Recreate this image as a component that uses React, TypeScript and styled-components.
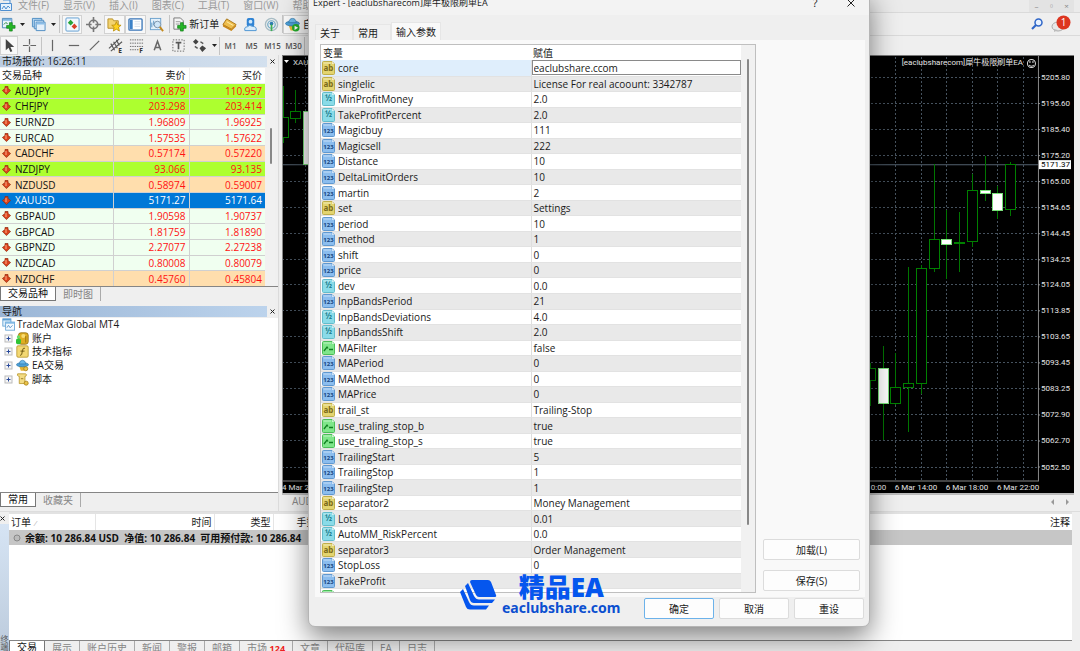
import React from 'react';
import styled, { createGlobalStyle, css } from 'styled-components';

const GlobalStyle = createGlobalStyle`
  * { box-sizing: border-box; }
  body {
    margin: 0;
    overflow: hidden;
    background: #efefef;
    color: #1a1a1a;
    font: 10px/14px "Open Sans", "Noto Sans CJK SC", sans-serif;
  }
  button, input { font: inherit; color: inherit; margin: 0; padding: 0; border: 0; background: none; }
  table { border-collapse: collapse; border-spacing: 0; }
  svg { display: block; flex: none; }
`;

/* ---------- shell ---------- */

const Shell = styled.div`
  position: relative;
  display: flex;
  flex-direction: column;
  height: 100vh;
  overflow: hidden;
`;

const MenuBar = styled.nav`
  display: flex;
  align-items: flex-start;
  height: 12px;
  background: #ebebeb;
  color: #999;
`;

const MenuItem = styled.button`
  margin-right: 14px;
  line-height: 10px;
  white-space: nowrap;
`;

const MenuLogo = styled.span`
  width: 18px;
`;

const WindowButtons = styled.div`
  display: flex;
  align-self: stretch;
  margin-left: auto;
  margin-right: 6px;
  background: #e3e3e3;
`;

const WindowButton = styled.button`
  width: 15px;
  color: #888;
  font-size: 8px;
  line-height: 10px;
`;

const ToolBar = styled.div<{ $height: number }>`
  display: flex;
  align-items: center;
  height: ${p => p.$height}px;
  border-top: 1px solid #dadada;
`;

const Tool = styled.button<{ $width?: number; $on?: boolean }>`
  display: flex;
  align-items: center;
  justify-content: center;
  flex: none;
  width: ${p => p.$width ?? 21}px;
  height: 19px;
  white-space: nowrap;
  ${p => p.$on && css`background: #f8f8f8; border: 1px solid #d2d2d2;`}
`;

const Divider = styled.span`
  flex: none;
  width: 1px;
  height: 18px;
  background: #c4c4c4;
`;

const Period = styled(Tool)`
  width: 21px;
  color: #555;
  font-size: 8px;
  font-weight: 600;
`;

const ToolEnd = styled.div`
  display: flex;
  align-items: center;
  gap: 8px;
  margin-left: auto;
  margin-right: 9px;
`;

const Workspace = styled.main`
  display: flex;
  height: 457px;
  flex: none;
  border-bottom: 1px solid #ddd;
`;

/* ---------- side panels ---------- */

const Side = styled.aside`
  display: flex;
  flex-direction: column;
  flex: none;
  width: 279px;
  border-right: 1px solid #dcdcdc;
`;

const PanelTitle = styled.h2<{ $height: number; $from: string; $to: string }>`
  display: flex;
  align-items: center;
  height: ${p => p.$height}px;
  margin: 0;
  font-size: 10px;
  font-weight: 400;
  line-height: 11px;
  > span {
    flex: 1;
    padding-left: 2px;
    background: linear-gradient(90deg, ${p => p.$from}, ${p => p.$to});
  }
`;

const IconButton = styled.button<{ $width: number; $height: number }>`
  display: flex;
  align-items: center;
  justify-content: center;
  flex: none;
  width: ${p => p.$width}px;
  height: ${p => p.$height}px;
`;

const MarketBody = styled.div`
  display: flex;
  height: 218px;
  overflow: hidden;
`;

const QuoteTable = styled.table`
  width: 265px;
  height: 219px;
  table-layout: fixed;
  background: #fff;
  th, td {
    height: 15px;
    padding: 0 3px 0 0;
    border-right: 1px solid #d0d0d0;
    border-bottom: 1px solid #d0d0d0;
    font-weight: 400;
    line-height: 14px;
    text-align: right;
  }
  th { border-color: #eee; }
  th:first-child, td:first-child { padding-left: 2px; text-align: left; }
  th:last-child, td:last-child { padding-right: 3px; border-right: 0; }
`;

const tones = { lime: '#adff2f', mint: '#f0fff0', peach: '#ffdead', blue: '#0078d7' };
type Tone = keyof typeof tones;

const QuoteRow = styled.tr<{ $tone: Tone }>`
  background: ${p => tones[p.$tone]};
  td { color: ${p => (p.$tone === 'blue' ? '#fff' : '#ff1212')}; }
  td:first-child { color: ${p => (p.$tone === 'blue' ? '#fff' : '#111')}; }
`;

const Symbol = styled.span`
  display: flex;
  align-items: center;
  gap: 4px;
`;

const ScrollGutter = styled.div<{ $top: number; $length: number; $inset: number }>`
  flex: 1;
  padding: ${p => p.$top}px 0 0 ${p => p.$inset}px;
  background: #f1f1f1;
  &::before {
    content: "";
    display: block;
    width: 2px;
    height: ${p => p.$length}px;
    border-radius: 1px;
    background: #888;
  }
`;

const TabStrip = styled.div<{ $height: number }>`
  display: flex;
  align-items: flex-start;
  flex: none;
  height: ${p => p.$height}px;
  overflow: hidden;
  border-top: 1px solid #858585;
`;

const Tab = styled.button<{ $on?: boolean }>`
  flex: none;
  height: 14px;
  padding: 0 7px;
  border-right: 1px solid #aaa;
  color: #858585;
  line-height: 13px;
  white-space: nowrap;
  ${p => p.$on && css`
    background: #fff;
    color: #111;
    border: 1px solid #777;
    border-top: 0;
  `}
  b { color: #f02020; font-size: 9px; }
`;

const NavBody = styled.div`
  flex: 1;
  background: #fff;
`;

const Tree = styled.ul`
  display: grid;
  grid-auto-rows: 1fr;
  height: 68px;
  margin: 0;
  padding: 0;
  list-style: none;
  line-height: 13px;
`;

const TreeItem = styled.li<{ $nested?: boolean }>`
  display: flex;
  align-items: center;
  gap: ${p => (p.$nested ? 3 : 2)}px;
  padding-left: ${p => (p.$nested ? 4 : 2)}px;
`;

/* ---------- chart ---------- */

const ChartColumn = styled.section`
  display: flex;
  flex-direction: column;
  flex: 1;
  min-width: 0;
  margin-left: 3px;
  margin-right: 6px;
`;

const ChartSvg = styled.svg`
  width: 100%;
  height: 438px;
  background: #000;
  border-top: 1px solid #777;
  text { font-family: Roboto, "Noto Sans CJK SC", sans-serif; font-size: 8px; fill: #e4e4e4; }
`;

const ChartTabs = styled.div`
  display: flex;
  justify-content: space-between;
  height: 17px;
  padding: 0 4px 0 10px;
  border-top: 2px solid #bbb;
  color: #888;
  line-height: 13px;
`;

/* ---------- terminal ---------- */

const Terminal = styled.section`
  display: flex;
  flex: 1;
  min-height: 0;
  padding-right: 8px;
`;

const TerminalGrip = styled.div`
  display: flex;
  flex-direction: column;
  width: 9px;
  overflow: hidden;
  > span {
    flex: 1;
    display: flex;
    justify-content: flex-end;
    writing-mode: vertical-rl;
    color: #555;
    font-size: 8px;
    line-height: 9px;
    background: linear-gradient(#d6e4f4, #bccbdc);
  }
`;

const TerminalMain = styled.div`
  display: flex;
  flex-direction: column;
  flex: 1;
  min-width: 0;
`;

const TerminalBody = styled.div`
  flex: 1;
  min-height: 0;
  border-top: 2px solid #e2e2e2;
  background: #fff;
`;

const TerminalTable = styled.table`
  width: 100%;
  table-layout: fixed;
  th {
    height: 16px;
    padding: 0 2px;
    border-right: 1px solid #e5e5e5;
    font-weight: 400;
    text-align: right;
    white-space: nowrap;
  }
  th:first-child { text-align: left; }
  th:last-child { border-right: 0; }
  td {
    height: 15px;
    padding: 0 4px;
    background: #c6c6c6;
    font-weight: 700;
    color: #111;
    white-space: pre;
  }
`;

const SortMark = styled.span`
  margin-left: 4px;
  color: #aaa;
  font-size: 8px;
`;

const Balance = styled.span`
  display: flex;
  align-items: center;
  gap: 4px;
  line-height: 14px;
`;

/* ---------- dialog ---------- */

const Dialog = styled.form`
  position: absolute;
  top: -10px;
  left: 308px;
  width: 562px;
  display: flex;
  flex-direction: column;
  border: 1px solid #b5b5b5;
  border-radius: 7px;
  background: #efefef;
  box-shadow: 0 10px 28px rgba(0, 0, 0, 0.5);
`;

const DialogTitle = styled.header`
  display: flex;
  align-items: center;
  height: 24px;
  padding: 0 10px 0 4px;
  border-radius: 7px 7px 0 0;
  background: #f3f3f3;
  h1 { flex: 1; margin: 0; font-size: 9px; font-weight: 400; }
  button { font-size: 11px; }
  button + button { margin-left: 20px; }
`;

const DialogTabs = styled.div`
  display: flex;
  align-items: flex-end;
  height: 25px;
  padding-left: 6px;
`;

const DialogTab = styled.button<{ $on?: boolean }>`
  height: ${p => (p.$on ? 18 : 16)}px;
  padding: ${p => (p.$on ? '0 4px' : '0 12px 0 4px')};
  border: 1px solid #e6e6e6;
  border-bottom: 0;
  background: ${p => (p.$on ? '#f9f9f9' : '#f1f1f1')};
`;

const DialogPanel = styled.div`
  display: flex;
  margin: 0 4px 0 6px;
  height: 557px;
  padding: 4px 5px;
  background: #f9f9f9;
`;

const ParamBox = styled.div`
  display: flex;
  width: 436px;
  height: 549px;
  overflow: hidden;
  border: 1px solid #bfbfbf;
  background: #fff;
`;

const ParamTable = styled.table`
  width: 420px;
  height: 560px;
  table-layout: fixed;
  th, td {
    height: 15px;
    padding: 0 0 0 2px;
    font-weight: 400;
    line-height: 14px;
    text-align: left;
    white-space: nowrap;
  }
  td { border-bottom: 1px solid #e2e2e2; }
  td:first-child { padding-left: 1px; }
  td + td { border-left: 1px solid #dedede; }
  tbody tr:nth-child(even) { background: #e9e9e9; }
  tbody tr:first-child td:first-child { background: #dfeefc; }
  tbody tr:first-child td + td { padding: 0; }
`;

const ParamName = styled.span`
  display: flex;
  align-items: center;
  gap: 3px;
  height: 14px;
`;

const ValueInput = styled.input`
  display: block;
  width: 100%;
  height: 15px;
  padding-left: 1px;
  border: 1px solid #8a8a8a;
  background: #fff;
  outline: 0;
`;

const SideButtons = styled.div`
  display: flex;
  flex-direction: column;
  justify-content: flex-end;
  flex: 1;
  gap: 10px;
  padding: 0 0 2px 7px;
`;

const PushButton = styled.button<{ $primary?: boolean }>`
  height: 21px;
  flex: none;
  border: 1px solid ${p => (p.$primary ? '#6cb2ea' : '#dcdcdc')};
  border-radius: 2px;
  background: #fdfdfd;
`;

const DialogFooter = styled.footer`
  display: flex;
  justify-content: flex-end;
  gap: 5px;
  padding: 1px 5px 7px;
  ${PushButton} { width: 70px; }
`;

const Watermark = styled.div`
  position: absolute;
  top: 574px;
  left: 460px;
  display: flex;
  align-items: center;
  gap: 4px;
  color: #0556ee;
  font-family: "Noto Sans", "Noto Sans CJK SC", sans-serif;
  font-weight: 700;
  text-align: center;
  strong { display: block; font-size: 26px; line-height: 27px; }
  span { display: block; font-size: 14px; line-height: 14px; color: #0b4fd0; }
`;

/* ---------- icons ---------- */

type Kind = 'ab' | 'half' | 'num' | 'bool';
const kinds: Record<Kind, [string, string, string, string]> = {
  ab: ['#e3d46f', '#c0ae48', '#7a6a18', 'ab'],
  half: ['#8adbe8', '#62bccb', '#22808f', '½'],
  num: ['#8bbdee', '#5f98d0', '#17457f', '123'],
  bool: ['#7fe68a', '#4bbd58', '#0f8020', ''],
};

function KindIcon({ kind }: { kind: Kind }) {
  const [fill, edge, ink, label] = kinds[kind];
  return (
    <svg width="13" height="14" viewBox="0 0 13 14">
      <path d="M.5 1.500Q.5 .5 1.500 .5H10L12.500 3V12.500Q12.500 13.500 11.500 13.500H1.500Q.5 13.500 .5 12.500Z" fill={fill} stroke={edge} />
      <path d="M10 .5V3H12.500" fill="#fff" opacity=".6" />
      <path d="M1.500 2H9" stroke="#fff" opacity=".5" />
      {kind === 'bool' ? (
        <path d="M2 10L5 6L6 7.500M7 8.500H11" stroke={ink} strokeWidth="1.300" fill="none" />
      ) : (
        <text x="6.500" y={kind === 'half' ? 9 : 10} textAnchor="middle" fill={ink} fontFamily="Noto Sans" fontWeight="700" fontSize={kind === 'num' ? 6 : 8}>{label}</text>
      )}
    </svg>
  );
}

const Cross = ({ size, weight = 1 }: { size: number; weight?: number }) => (
  <svg width={size} height={size} viewBox={`0 0 ${size} ${size}`}>
    <path d={`M.5 .5L${size - 0.500} ${size - 0.500}M${size - 0.500} .5L.5 ${size - 0.500}`} stroke="#222" strokeWidth={weight} />
  </svg>
);

const QuoteArrow = () => (
  <svg width="9" height="9" viewBox="0 0 9 9">
    <path d="M3 .5H6V2.500L8.600 4.500L4.500 8.600L.4 4.500L3 2.500Z" fill="#d9431c" stroke="#8f2a10" strokeWidth=".7" />
    <path d="M4 2V6" stroke="#ffb08a" />
  </svg>
);

const Caret = () => (
  <svg width="5" height="3" viewBox="0 0 5 3"><path d="M0 0H5L2.500 3Z" fill="#222" /></svg>
);

const Plus = () => (
  <path d="M9 6H12V9H15V12H12V15H9V12H6V9H9Z" fill="#25b525" stroke="#0b7a12" strokeWidth=".7" />
);

const Glyph = ({ children, size = 15 }: { children: React.ReactNode; size?: number }) => (
  <svg width={size} height={size} viewBox="0 0 16 16" fill="none">{children}</svg>
);

const NewChartIcon = () => <Glyph><path d="M1.500 1.500H11.500V11.500H1.500Z" fill="#e8f2fb" stroke="#4a86b8" /><path d="M2 2H11V4H2Z" fill="#7fb4e0" /><path d="M3 8L5 6L7 7" stroke="#2a8a3a" /><Plus /></Glyph>;
const ProfilesIcon = () => <Glyph><path d="M1.500 1.500H11.500V10.500H1.500Z" fill="#b9d8f2" stroke="#4d8cc2" /><path d="M3.500 3.500H13.500V12.500H3.500Z" fill="#cfe4f6" stroke="#4d8cc2" /><path d="M5.500 5.500H15V14.500H5.500Z" fill="#e4f0fa" stroke="#4d8cc2" /><path d="M6 6H14.500V8H6Z" fill="#8abde8" /></Glyph>;
const WatchIcon = () => <Glyph><rect x="1" y="1" width="14" height="14" rx="1" fill="#f2f8fd" stroke="#5e9cd0" /><path d="M6 3L9 6L6 9L3 6Z" fill="#27a53a" /><path d="M10 7L13 10L10 13L7 10Z" fill="#d9402a" /></Glyph>;
const TargetIcon = () => <Glyph><circle cx="8" cy="8" r="4.500" stroke="#777" strokeWidth="1.700" /><path d="M8 0V6M8 10V16M0 8H6M10 8H16" stroke="#777" strokeWidth="1.700" /></Glyph>;
const StarFolderIcon = () => <Glyph><path d="M1 2H6L7 4H12V12H1Z" fill="#f3d370" stroke="#b89026" /><path d="M10 5L11.500 8.500L15 8.800L12.400 11L13.200 15L10 13L6.800 15L7.600 11L5 8.800L8.500 8.500Z" fill="#ffd21f" stroke="#b88a00" strokeWidth=".8" /></Glyph>;
const DataIcon = () => <Glyph><rect x="1" y="2" width="14" height="12" rx="1" fill="#fff" stroke="#3a76b8" strokeWidth="1.400" /><path d="M2 3H5V13H2Z" fill="#3c82c8" /><path d="M7 5H13M7 7.500H13M7 10H13" stroke="#d5dfea" /></Glyph>;
const TesterIcon = () => <Glyph><rect x="1.500" y="1.500" width="11" height="12" fill="#e3f0fb" stroke="#6aa0cc" /><path d="M3 11V6M5 9V4" stroke="#5a93c2" /><circle cx="9" cy="8" r="3.500" fill="#cfe6f8" stroke="#7b93ab" /><path d="M11.500 10.500L15 15" stroke="#c58a1c" strokeWidth="2" /></Glyph>;
const OrderIcon = () => <Glyph><path d="M2 1H9L12 4V13H2Z" fill="#f4f4f4" stroke="#777" /><path d="M4 5H9M4 7.500H8" stroke="#999" /><Plus /></Glyph>;
const BookIcon = () => <Glyph><path d="M1 8L5 2L15 8L10 13Z" fill="#eebd4c" stroke="#a87416" /><path d="M1 8V10L10 15L15 10V8L10 13Z" fill="#c98618" /><path d="M5 5L12 9" stroke="#fff0b0" /></Glyph>;
const CommunityIcon = () => <Glyph><rect x="4" y="1" width="8" height="9" rx="2" fill="#2f83d4" /><circle cx="8" cy="5" r="2" fill="#cfe8fb" /><path d="M2 14.500Q1 10.500 4.500 10.500Q7 7.500 10 10Q15 10 14 14.500Z" fill="#d9ecfa" stroke="#4a92d2" /></Glyph>;
const SignalIcon = () => <Glyph><circle cx="8" cy="8" r="6.500" stroke="#a8bcc4" strokeWidth="1.500" /><circle cx="8" cy="8" r="4" stroke="#6fa9c6" strokeWidth="1.300" /><circle cx="8" cy="7" r="2" fill="#2b7cb0" /><path d="M8 8V15" stroke="#3fb052" strokeWidth="1.800" /></Glyph>;
const HatIcon = ({ play, size }: { play?: boolean; size?: number }) => <Glyph size={size}><path d="M3.500 8H12.500L10 14.500H6Z" fill="#e8b531" /><ellipse cx="8" cy="7" rx="7.500" ry="2.600" fill="#4b9fd6" stroke="#276fa5" strokeWidth=".7" /><path d="M4 6Q4.500 1.500 8 1.500Q11.500 1.500 12 6Z" fill="#6cb8e8" stroke="#276fa5" strokeWidth=".7" />{play ? <><circle cx="11.500" cy="11.500" r="4" fill="#22ad2c" /><path d="M10.200 9.200V13.800L14 11.500Z" fill="#fff" /></> : <circle cx="12" cy="12" r="2.500" fill="#eac44a" stroke="#a87f12" />}</Glyph>;
const PointerIcon = () => <Glyph><path d="M4 1V13L7 10.500L9 15L11 14L9 9.700H13Z" fill="#444" /></Glyph>;
const Strokes = ({ d, w = 1.300 }: { d: string; w?: number }) => <Glyph><path d={d} stroke="#666" strokeWidth={w} /></Glyph>;
const ChannelIcon = () => <Glyph><path d="M1 11L12 1M3 14L15 4M3 6L7 13M6 4L10 11M9 2L12 8" stroke="#555" strokeWidth="1.200" /><text x="11" y="16" fontSize="7" fontWeight="700" fill="#333">E</text></Glyph>;
const FiboIcon = () => <Glyph><path d="M1 2H15M1 5.500H15M1 9H15M1 12.500H10" stroke="#666" strokeDasharray="1.500 1" /><text x="11" y="16" fontSize="7" fontWeight="700" fill="#333">F</text></Glyph>;
const LabelIcon = () => <Glyph><rect x="2" y="2" width="12" height="12" stroke="#666" strokeDasharray="1.500 1.500" /><path d="M5 5H11M8 5V12" stroke="#555" strokeWidth="1.800" /></Glyph>;
const ArrowsIcon = () => <Glyph><path d="M1 4L4 1L7 4L4 7ZM8 11L11 8L15 11L11 15Z" fill="#444" /><path d="M3 9L6 11M9 4L12 6" stroke="#555" strokeWidth="1.500" /></Glyph>;
const PlatformIcon = () => <Glyph size={13}><rect x="1" y="1" width="10" height="9" fill="#dceefb" stroke="#5e9fd2" /><path d="M1 1H11V3H1Z" fill="#5e9fd2" /><rect x="4.500" y="5" width="11" height="10" fill="#f5faff" stroke="#5e9fd2" /><path d="M4.500 5H15.500V7H4.500Z" fill="#7fb8e4" /><path d="M6 12L8 9L10 12L13 9" stroke="#4a8ac2" /></Glyph>;
const AccountsIcon = () => <Glyph size={13}><rect x="3" y="1" width="12" height="14" rx="3" fill="#dfae22" stroke="#8f6a0c" /><circle cx="9" cy="5" r="2.500" fill="#f8dc72" /><path d="M12 5V13" stroke="#8f6a0c" /><rect x="0" y="8" width="6" height="7" rx="2" fill="#2fc436" /><circle cx="3" cy="6" r="2" fill="#62e066" /></Glyph>;
const IndicatorIcon = () => <Glyph size={13}><rect x="1" y="1" width="14" height="14" rx="1.500" fill="#f3d873" stroke="#b8962c" /><path d="M11 4Q8.500 3 8 6.500L7 11.500Q6.500 13 5 12.500M5.500 7.500H10.500" stroke="#6b5510" strokeWidth="1.200" /></Glyph>;
const ScriptIcon = () => <Glyph size={13}><path d="M2 1H12Q14 2 12 4H11V13H4V4H3Q1 3 2 1Z" fill="#f3dc85" stroke="#b8962c" /><path d="M6 7H9" stroke="#8a6d1a" /><circle cx="12.500" cy="12.500" r="2.500" fill="#eac44a" stroke="#a87f12" /></Glyph>;
const Expander = () => <svg width="9" height="9" viewBox="0 0 9 9"><rect x="1" y="1" width="7" height="7" fill="#f6f6f6" stroke="#bbb" /><path d="M2.500 4.500H6.500M4.500 2.500V6.500" stroke="#2a4a9a" /></svg>;

/* ---------- data ---------- */

const menus = ['文件(F)', '显示(V)', '插入(I)', '图表(C)', '工具(T)', '窗口(W)', '帮助(H)'];

const quotes: [string, string, string, Tone][] = [
  ['AUDJPY', '110.879', '110.957', 'lime'],
  ['CHFJPY', '203.298', '203.414', 'lime'],
  ['EURNZD', '1.96809', '1.96925', 'mint'],
  ['EURCAD', '1.57535', '1.57622', 'mint'],
  ['CADCHF', '0.57174', '0.57220', 'peach'],
  ['NZDJPY', '93.066', '93.135', 'lime'],
  ['NZDUSD', '0.58974', '0.59007', 'peach'],
  ['XAUUSD', '5171.27', '5171.64', 'blue'],
  ['GBPAUD', '1.90598', '1.90737', 'mint'],
  ['GBPCAD', '1.81759', '1.81890', 'mint'],
  ['GBPNZD', '2.27077', '2.27238', 'mint'],
  ['NZDCAD', '0.80008', '0.80079', 'mint'],
  ['NZDCHF', '0.45760', '0.45804', 'peach'],
];

const params: [Kind, string, string][] = [
  ['ab', 'core', 'eaclubshare.ccom'],
  ['ab', 'singlelic', 'License For real acoount: 3342787'],
  ['half', 'MinProfitMoney', '2.0'],
  ['half', 'TakeProfitPercent', '2.0'],
  ['num', 'Magicbuy', '111'],
  ['num', 'Magicsell', '222'],
  ['num', 'Distance', '10'],
  ['num', 'DeltaLimitOrders', '10'],
  ['num', 'martin', '2'],
  ['ab', 'set', 'Settings'],
  ['num', 'period', '10'],
  ['num', 'method', '1'],
  ['num', 'shift', '0'],
  ['num', 'price', '0'],
  ['half', 'dev', '0.0'],
  ['num', 'InpBandsPeriod', '21'],
  ['half', 'InpBandsDeviations', '4.0'],
  ['half', 'InpBandsShift', '2.0'],
  ['bool', 'MAFilter', 'false'],
  ['num', 'MAPeriod', '0'],
  ['num', 'MAMethod', '0'],
  ['num', 'MAPrice', '0'],
  ['ab', 'trail_st', 'Trailing-Stop'],
  ['bool', 'use_traling_stop_b', 'true'],
  ['bool', 'use_traling_stop_s', 'true'],
  ['num', 'TrailingStart', '5'],
  ['num', 'TrailingStop', '1'],
  ['num', 'TrailingStep', '1'],
  ['ab', 'separator2', 'Money Management'],
  ['half', 'Lots', '0.01'],
  ['half', 'AutoMM_RiskPercent', '0.0'],
  ['ab', 'separator3', 'Order Management'],
  ['num', 'StopLoss', '0'],
  ['num', 'TakeProfit', '0'],
  ['bool', '', ''],
];

const prices = ['5205.80', '5195.60', '5185.40', '5175.20', '5165.00', '5154.65', '5144.45', '5134.25', '5124.05', '5113.85', '5103.65', '5093.45', '5083.25', '5072.90', '5062.70', '5052.50'];

/* centre x, wick top, wick bottom, body top, body bottom, filled */
const candles: [number, number, number, number, number, boolean][] = [
  [284, 86, 143, 117, 137, false],
  [296, 90, 123, 111, 118, false],
  [309, 111, 165, 111, 164, true],
  [870, 363, 406, 368, 380, false],
  [883, 346, 440, 368, 403, true],
  [895, 353, 405, 387, 403, false],
  [908, 267, 432, 383, 387, false],
  [921, 265, 394, 268, 383, false],
  [934, 164, 272, 239, 268, false],
  [946, 210, 279, 239, 244, true],
  [959, 212, 272, 242, 243, false],
  [972, 174, 247, 190, 241, false],
  [985, 156, 201, 190, 193, true],
  [997, 186, 219, 193, 210, true],
  [1010, 162, 216, 164, 209, false],
];

function Chart() {
  const columns = Array.from({ length: 30 }, (_, i) => Math.round(1023 - i * 25.600));
  return (
    <ChartSvg viewBox="283 56 791 437" preserveAspectRatio="xMaxYMin slice">
      <g stroke="#46525e" strokeDasharray="2 2" shapeRendering="crispEdges">
        {prices.map((p, i) => {
          const y = Math.round(77 + i * 25.930) + 0.500;
          return <path key={p} d={`M283 ${y}H1038`} />;
        })}
        {columns.map(x => <path key={x} d={`M${x + 0.500} 57V480`} />)}
      </g>
      <path d="M283 164.500H1038" stroke="#53626f" />
      {candles.map(([x, hi, lo, top, bottom, filled]) => (
        <g key={x} fill={filled ? '#fff' : '#000'} shapeRendering="crispEdges">
          <path d={`M${x + 0.500} ${hi}V${lo}`} stroke="#007500" />
          <rect x={x - 4.500} y={top + 0.500} width="10" height={bottom - top} stroke={filled ? '#7be07b' : '#008000'} />
        </g>
      ))}
      <path d="M283 480.500H1038.500V56M283.500 56V493" stroke="#888" fill="none" />
      {prices.map((p, i) => (
        <g key={p}>
          <path d={`M1038 ${Math.round(77 + i * 25.930) + 0.500}H1040`} stroke="#999" />
          <text x="1041" y={Math.round(80 + i * 25.930)}>{p}</text>
        </g>
      ))}
      <rect x="1039" y="160" width="32" height="9" fill="#fff" />
      <text x="1041" y="167" style={{ fill: '#000' }}>5171.37</text>
      <path d="M285 60H290L287.500 63Z" fill="#fff" />
      <text x="294" y="65">XAUUSD,M30</text>
      <text x="283" y="489">4 Mar 2026</text>
      <text x="844" y="489">6 Mar 10:00</text>
      <text x="895" y="489">6 Mar 14:00</text>
      <text x="946" y="489">6 Mar 18:00</text>
      <text x="997" y="489">6 Mar 22:00</text>
      <text x="1023" y="65" textAnchor="end">[eaclubsharecom]犀牛极限刷单EA</text>
      <g stroke="#ddd" fill="none">
        <circle cx="1031.500" cy="63.500" r="4" />
        <path d="M1029 65Q1031.500 67.500 1034 65M1030 61V63M1033 61V63" />
      </g>
    </ChartSvg>
  );
}

export default function App() {
  return (
    <Shell>
      <GlobalStyle />
      <MenuBar>
        <MenuLogo>
          <svg width="12" height="11" viewBox="0 0 12 11" fill="none"><path d="M3 0H10V4M.5 3.500H11.500V10.500H.5Z" fill="#e4f1fc" stroke="#4f8fd0" /><path d="M2 9L4 6L6 9L8 6L10 8" stroke="#4f8fd0" /></svg>
        </MenuLogo>
        {menus.map(m => <MenuItem key={m}>{m}</MenuItem>)}
        <WindowButtons>
          <WindowButton aria-label="Minimize">–</WindowButton>
          <WindowButton aria-label="Restore">▫</WindowButton>
          <WindowButton aria-label="Close">×</WindowButton>
        </WindowButtons>
      </MenuBar>

      <ToolBar $height={23}>
        <Tool $width={17}><NewChartIcon /></Tool><Tool $width={11}><Caret /></Tool>
        <Tool><ProfilesIcon /></Tool><Tool $width={8}><Caret /></Tool>
        <Tool $width={5}><Divider /></Tool>
        <Tool $width={20} $on><WatchIcon /></Tool>
        <Tool $width={22}><TargetIcon /></Tool>
        <Tool $on><StarFolderIcon /></Tool>
        <Tool $on><DataIcon /></Tool>
        <Tool><TesterIcon /></Tool>
        <Tool $width={5}><Divider /></Tool>
        <Tool $width={47}><OrderIcon />&nbsp;新订单</Tool>
        <Tool><BookIcon /></Tool><Tool><CommunityIcon /></Tool><Tool><SignalIcon /></Tool>
        <Tool $width={1}><Divider /></Tool>
        <Tool $width={62} $on><HatIcon play />&nbsp;自动交易</Tool>
        <ToolEnd>
          <svg width="12" height="12" viewBox="0 0 12 12" fill="none"><circle cx="7.500" cy="4.500" r="3.500" fill="#e8f2ff" stroke="#2f66c8" strokeWidth="1.500" /><path d="M5 7L1 11" stroke="#2f66c8" strokeWidth="2.200" /></svg>
          <svg width="20" height="18" viewBox="0 0 20 18"><ellipse cx="7" cy="11.500" rx="6" ry="4.500" fill="#e8e8e8" stroke="#aaa" /><path d="M3 14V17L7 15Z" fill="#bbb" /><circle cx="12.500" cy="7.500" r="7" fill="#dd3520" /><text x="12.500" y="11" textAnchor="middle" fill="#fff" fontSize="10">1</text></svg>
        </ToolEnd>
      </ToolBar>

      <ToolBar $height={20}>
        <Tool $width={18} $on><PointerIcon /></Tool>
        <Tool $width={23}><Strokes d="M8 1V7M8 9V15M1 8H7M9 8H15" /></Tool>
        <Divider />
        <Tool><Strokes d="M8 2V14" /></Tool>
        <Tool><Strokes d="M3 8H14" /></Tool>
        <Tool><Strokes d="M3 13L13 3" /></Tool>
        <Tool><ChannelIcon /></Tool>
        <Tool><FiboIcon /></Tool>
        <Tool><Strokes d="M4.500 13L8 3.500L11.500 13M6 10H10" w={1.600} /></Tool>
        <Tool><LabelIcon /></Tool>
        <Tool><ArrowsIcon /></Tool>
        <Tool $width={9}><Caret /></Tool>
        <Divider />
        {['M1', 'M5', 'M15', 'M30'].map(p => <Period key={p}>{p}</Period>)}
        <Divider />
      </ToolBar>

      <Workspace>
        <Side>
          <PanelTitle $height={13} $from="#bccde2" $to="#d3e0ee">
            <span>市场报价: 16:26:11</span>
            <IconButton $width={11} $height={11} aria-label="Close"><Cross size={5} /></IconButton>
          </PanelTitle>
          <MarketBody>
            <QuoteTable>
              <colgroup><col style={{ width: 113 }} /><col style={{ width: 76 }} /><col /></colgroup>
              <thead><tr><th>交易品种</th><th>卖价</th><th>买价</th></tr></thead>
              <tbody>
                {quotes.map(([s, bid, ask, tone]) => (
                  <QuoteRow key={s} $tone={tone}>
                    <td><Symbol><QuoteArrow />{s}</Symbol></td><td>{bid}</td><td>{ask}</td>
                  </QuoteRow>
                ))}
              </tbody>
            </QuoteTable>
            <ScrollGutter $top={60} $length={36} $inset={5} />
          </MarketBody>
          <TabStrip $height={19}><Tab $on>交易品种</Tab><Tab>即时图</Tab></TabStrip>
          <PanelTitle $height={13} $from="#9bb6d6" $to="#bcd3ec">
            <span>导航</span>
            <IconButton $width={11} $height={11} aria-label="Close"><Cross size={5} /></IconButton>
          </PanelTitle>
          <NavBody>
            <Tree>
              <TreeItem><PlatformIcon />TradeMax Global MT4</TreeItem>
              <TreeItem $nested><Expander /><AccountsIcon />账户</TreeItem>
              <TreeItem $nested><Expander /><IndicatorIcon />技术指标</TreeItem>
              <TreeItem $nested><Expander /><HatIcon size={13} />EA交易</TreeItem>
              <TreeItem $nested><Expander /><ScriptIcon />脚本</TreeItem>
            </Tree>
          </NavBody>
          <TabStrip $height={19}><Tab $on>常用</Tab><Tab>收藏夹</Tab></TabStrip>
        </Side>
        <ChartColumn>
          <Chart />
          <ChartTabs>
            <span>AUDUSD</span>
            <svg width="20" height="14" viewBox="0 0 20 14"><path d="M4 4V10L1 7ZM16 4V10L19 7Z" fill="#999" /></svg>
          </ChartTabs>
        </ChartColumn>
      </Workspace>

      <Terminal>
        <TerminalGrip>
          <IconButton $width={5} $height={12} aria-label="Close"><Cross size={5} /></IconButton>
          <span>终端</span>
        </TerminalGrip>
        <TerminalMain>
          <TerminalBody>
            <TerminalTable>
              <colgroup><col style={{ width: 86 }} /><col style={{ width: 119 }} /><col style={{ width: 59 }} /><col style={{ width: 46 }} /><col /></colgroup>
              <thead><tr><th>订单<SortMark>⁄</SortMark></th><th>时间</th><th>类型</th><th>手数</th><th>注释</th></tr></thead>
              <tbody><tr><td colSpan={5}>
                <Balance>
                  <svg width="8" height="8" viewBox="0 0 8 8"><circle cx="4" cy="4" r="3" fill="#bbb" stroke="#888" /></svg>
                  {'余额: 10 286.84 USD  净值: 10 286.84  可用预付款: 10 286.84'}
                </Balance>
              </td></tr></tbody>
            </TerminalTable>
          </TerminalBody>
          <TabStrip $height={11}>
            <Tab $on>交易</Tab><Tab>展示</Tab><Tab>账户历史</Tab><Tab>新闻</Tab><Tab>警报</Tab><Tab>邮箱</Tab>
            <Tab>市场 <b>124</b></Tab><Tab>文章</Tab><Tab>代码库</Tab><Tab>EA</Tab><Tab>日志</Tab>
          </TabStrip>
        </TerminalMain>
      </Terminal>

      <Dialog onSubmit={e => e.preventDefault()}>
        <DialogTitle>
          <h1>Expert - [eaclubsharecom]犀牛极限刷单EA</h1>
          <IconButton type="button" $width={16} $height={14} aria-label="Help">?</IconButton>
          <IconButton type="button" $width={16} $height={14} aria-label="Close"><Cross size={8} /></IconButton>
        </DialogTitle>
        <DialogTabs>
          <DialogTab type="button">关于</DialogTab>
          <DialogTab type="button">常用</DialogTab>
          <DialogTab type="button" $on>输入参数</DialogTab>
        </DialogTabs>
        <DialogPanel>
          <ParamBox>
            <ParamTable>
              <colgroup><col style={{ width: 210 }} /><col /></colgroup>
              <thead><tr><th>变量</th><th>赋值</th></tr></thead>
              <tbody>
                {params.map(([kind, name, value], i) => (
                  <tr key={i}>
                    <td><ParamName><KindIcon kind={kind} />{i === 0 ? <label htmlFor="core">{name}</label> : name}</ParamName></td>
                    <td>{i === 0 ? <ValueInput id="core" defaultValue={value} /> : value}</td>
                  </tr>
                ))}
              </tbody>
            </ParamTable>
            <ScrollGutter $top={14} $length={466} $inset={6} />
          </ParamBox>
          <SideButtons>
            <PushButton type="button">加载(L)</PushButton>
            <PushButton type="button">保存(S)</PushButton>
          </SideButtons>
        </DialogPanel>
        <DialogFooter>
          <PushButton $primary>确定</PushButton>
          <PushButton type="button">取消</PushButton>
          <PushButton type="button">重设</PushButton>
        </DialogFooter>
      </Dialog>

      <Watermark>
        <svg width="38" height="34" viewBox="0 0 38 34" fill="#0556ee">
          <path d="M12 2H28Q30 2 31 4L36 17Q37 19 34 19H19Q17 19 16 17L10 4Q10 2 12 2Z" />
          <path d="M5 8L8 5L14 18Q16 21.500 19 21.500H35L32 25H14Q11 25 10 22Z" />
          <path d="M0 14L3 11L9 24Q10.500 27.500 14 27.500H29L26 31.500H10Q7 31.500 6 29Z" />
        </svg>
        <div><strong>精品EA</strong><span>eaclubshare.com</span></div>
      </Watermark>
    </Shell>
  );
}
